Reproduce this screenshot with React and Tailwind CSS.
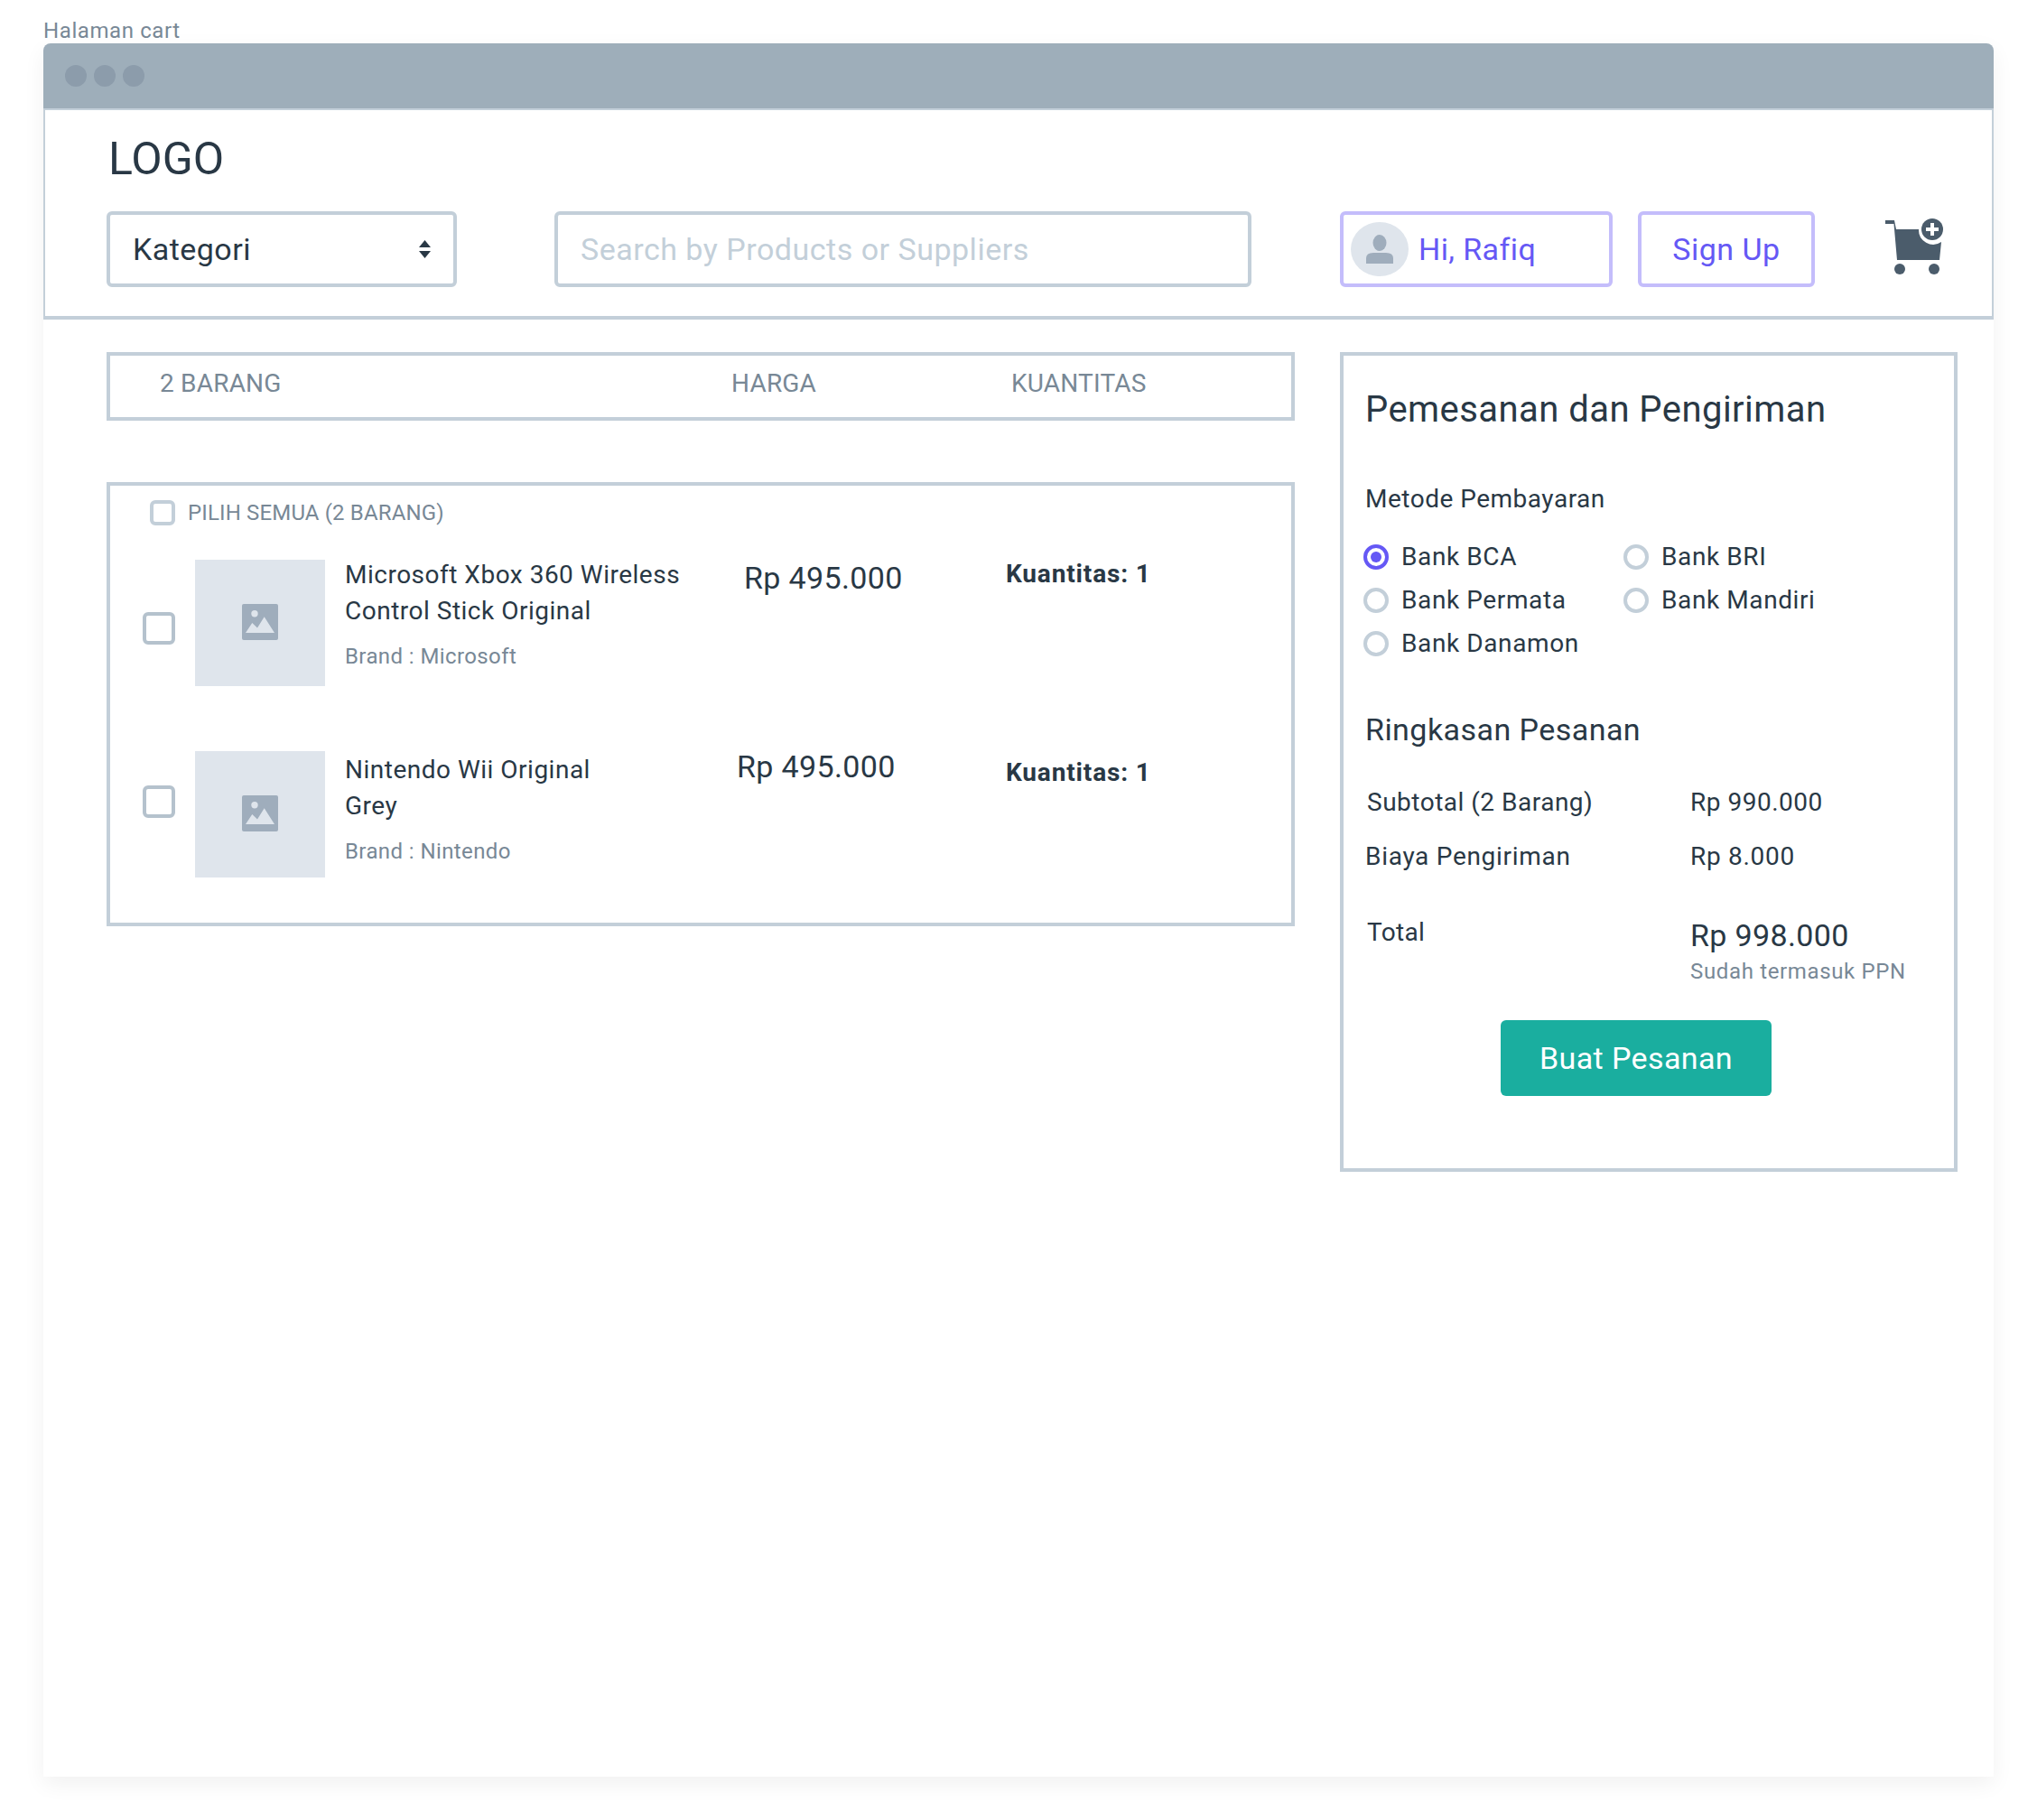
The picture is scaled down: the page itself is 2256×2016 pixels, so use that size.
const items = [
  {
    title: ['Microsoft Xbox 360 Wireless', 'Control Stick Original'],
    brand: 'Brand : Microsoft',
    rowClass: '',
    checkClass: 'mt-[58px]',
    textClass: 'w-[442px] -mt-[3px]',
    priceClass: 'w-[290px] mt-0',
    qtyClass: '-mt-1',
  },
  {
    title: ['Nintendo Wii Original', 'Grey'],
    brand: 'Brand : Nintendo',
    rowClass: 'mt-[72px]',
    checkClass: 'mt-[38px]',
    textClass: 'w-[434px] mt-px',
    priceClass: 'w-[298px] -mt-[3px]',
    qtyClass: 'mt-1',
  },
];

const banks = [
  { name: 'Bank BCA', checked: true },
  { name: 'Bank BRI' },
  { name: 'Bank Permata' },
  { name: 'Bank Mandiri' },
  { name: 'Bank Danamon' },
];

function ImageIcon() {
  return (
    <svg width="40" height="40" viewBox="0 0 40 40">
      <rect width="40" height="40" rx="2" fill="#9fadbc" />
      <circle cx="14" cy="10.7" r="3.7" fill="#dfe5ec" />
      <path d="M4 32 L11.3 21 L17 26.5 L24.7 14.3 L36 32 Z" fill="#dfe5ec" />
    </svg>
  );
}

function CartIcon() {
  return (
    <svg width="64" height="62" viewBox="0 0 64 62" className="shrink-0">
      <path d="M0 2 H10 L12 12 H37 A16 16 0 0 0 62 26 L60 46 H13 L9.5 6 H0 Z" fill="#4b5c6b" />
      <circle cx="52" cy="12" r="12" fill="#4b5c6b" />
      <path d="M50 5 H54 V10 H59 V14 H54 V19 H50 V14 H45 V10 H50 Z" fill="#ffffff" />
      <circle cx="16" cy="56" r="6" fill="#4b5c6b" />
      <circle cx="54" cy="56" r="6" fill="#4b5c6b" />
    </svg>
  );
}

function PersonIcon() {
  return (
    <svg width="64" height="60" viewBox="0 0 64 60" className="shrink-0">
      <ellipse cx="32" cy="30" rx="32" ry="30" fill="#dfe5ec" />
      <ellipse cx="32" cy="23" rx="7.5" ry="9" fill="#9fadbc" />
      <path d="M17 46 V40 Q17 34 25 34 H39 Q47 34 47 40 V46 Z" fill="#9fadbc" />
    </svg>
  );
}

function Radio({ checked }) {
  if (checked) {
    return (
      <div className="w-7 h-7 rounded-full border-4 border-[#6558f5] flex items-center justify-center shrink-0">
        <div className="w-3 h-3 rounded-full bg-[#6558f5]" />
      </div>
    );
  }
  return <div className="w-7 h-7 rounded-full border-4 border-[#c3cfd9] shrink-0" />;
}

export default function App() {
  return (
    <div className="min-h-screen bg-white px-12 pt-5 font-['Roboto',sans-serif] text-[#293845]">
      <div className="text-[24px] leading-[28px] tracking-[0.6px] text-[#788896]">Halaman cart</div>
      <div className="w-[2160px] h-[1920px] bg-white rounded-t-lg shadow-[0_8px_24px_rgba(0,0,0,0.06)]">
        <div className="h-[74px] bg-[#9eaeba] border-b-2 border-[#c3cfd9] rounded-t-lg flex items-center gap-2 pl-6">
          <div className="w-6 h-6 rounded-full bg-[#8c9cab]" />
          <div className="w-6 h-6 rounded-full bg-[#8c9cab]" />
          <div className="w-6 h-6 rounded-full bg-[#8c9cab]" />
        </div>

        <div className="h-[232px] border-x-2 border-b-4 border-[#c3cfd9] pl-[68px]">
          <div className="h-[112px] flex items-start">
            <div className="mt-6 ml-[2px] text-[50px] leading-[60px]">LOGO</div>
          </div>
          <div className="flex items-start h-[84px]">
            <div className="w-[388px] h-[84px] border-4 border-[#c3cfd9] rounded-md flex items-center justify-between pl-[25px] pr-[25px]">
              <span className="text-[34px] tracking-[0.45px]">Kategori</span>
              <svg width="13" height="20" viewBox="0 0 13 20">
                <path d="M6.5 0 L13 8 H0 Z M0 12 H13 L6.5 20 Z" fill="#293845" />
              </svg>
            </div>
            <input
              placeholder="Search by Products or Suppliers"
              className="ml-[108px] w-[772px] h-[84px] border-4 border-[#c3cfd9] rounded-md pl-[25px] text-[34px] tracking-[0.5px] placeholder:text-[#c3cfd9] outline-none"
            />
            <div className="ml-[98px] w-[302px] h-[84px] border-4 border-[#c4bdfb] rounded-md flex items-center pl-[8px] gap-[11px] text-[#6558f5]">
              <PersonIcon />
              <span className="text-[34px] tracking-[0.4px]">Hi, Rafiq</span>
            </div>
            <div className="ml-7 w-[196px] h-[84px] border-4 border-[#c4bdfb] rounded-md flex items-center justify-center text-[34px] tracking-[0.5px] text-[#6558f5]">
              Sign Up
            </div>
            <div className="ml-[78px] mt-2">
              <CartIcon />
            </div>
          </div>
        </div>

        <div className="flex pt-9 pl-[70px]">
          <div className="w-[1316px]">
            <div className="h-[76px] pb-[6px] border-4 border-[#c3cfd9] flex items-center text-[28px] tracking-[0.2px] text-[#788896]">
              <span className="ml-[55px] w-[633px]">2 BARANG</span>
              <span className="w-[310px]">HARGA</span>
              <span>KUANTITAS</span>
            </div>
            <div className="mt-[68px] h-[492px] border-4 border-[#c3cfd9]">
              <div className="ml-11 mt-4 flex items-center h-7">
                <div className="w-7 h-7 border-4 border-[#c3cfd9] rounded-md" />
                <span className="ml-[14px] text-[24px] tracking-[0.15px] text-[#788896]">PILIH SEMUA (2 BARANG)</span>
              </div>
              <div className="mt-[38px] ml-9">
                {items.map((item) => (
                  <div key={item.brand} className={`flex items-start h-[140px] ${item.rowClass}`}>
                    <div className={`w-9 h-9 border-4 border-[#b5c2cd] rounded-md ${item.checkClass}`} />
                    <div className="ml-[22px] w-[144px] h-[140px] pb-[2px] bg-[#dfe5ec] flex items-center justify-center">
                      <ImageIcon />
                    </div>
                    <div className={`ml-[22px] ${item.textClass}`}>
                      <div className="text-[28px] leading-[40px] tracking-[0.5px]">
                        {item.title.map((line) => (
                          <div key={line}>{line}</div>
                        ))}
                      </div>
                      <div className="mt-[15px] text-[24px] leading-[30px] tracking-[0.4px] text-[#788896]">{item.brand}</div>
                    </div>
                    <div className={`text-[34px] leading-[40px] tracking-[0.35px] ${item.priceClass}`}>Rp 495.000</div>
                    <div className={`text-[28px] leading-[40px] font-bold tracking-[0.85px] ${item.qtyClass}`}>Kuantitas: 1</div>
                  </div>
                ))}
              </div>
            </div>
          </div>

          <div className="ml-[50px] w-[684px] h-[908px] border-4 border-[#c3cfd9] pl-6 pt-9">
            <div className="text-[40px] leading-[48px] tracking-[0.45px]">Pemesanan dan Pengiriman</div>
            <div className="mt-[57px] text-[28px] leading-[36px] tracking-[0.5px]">Metode Pembayaran</div>
            <div className="mt-[22px] -ml-[2px] grid grid-cols-[288px_1fr]">
              {banks.map((bank) => (
                <div key={bank.name} className="h-12 flex items-center gap-[14px] text-[28px] tracking-[0.6px]">
                  <Radio checked={bank.checked} />
                  <span>{bank.name}</span>
                </div>
              ))}
            </div>
            <div className="mt-[49px] text-[34px] leading-[44px] tracking-[0.45px]">Ringkasan Pesanan</div>
            <div className="mt-[41px] flex text-[28px] leading-[36px] tracking-[0.5px]">
              <span className="w-[360px] pl-[2px]">Subtotal (2 Barang)</span>
              <span>Rp 990.000</span>
            </div>
            <div className="mt-6 flex text-[28px] leading-[36px] tracking-[0.7px]">
              <span className="w-[360px]">Biaya Pengiriman</span>
              <span>Rp 8.000</span>
            </div>
            <div className="mt-[47px] flex items-start">
              <span className="mt-px w-[360px] pl-[2px] text-[28px] leading-[36px] tracking-[0.3px]">Total</span>
              <div>
                <div className="text-[34px] leading-[44px] tracking-[0.35px]">Rp 998.000</div>
                <div className="text-[24px] leading-[36px] tracking-[0.65px] text-[#788896]">Sudah termasuk PPN</div>
              </div>
            </div>
            <button className="mt-9 ml-[150px] w-[300px] h-[84px] rounded-md bg-[#1aae9f] text-white text-[34px] tracking-[0.4px]">
              Buat Pesanan
            </button>
          </div>
        </div>
      </div>
    </div>
  );
}
